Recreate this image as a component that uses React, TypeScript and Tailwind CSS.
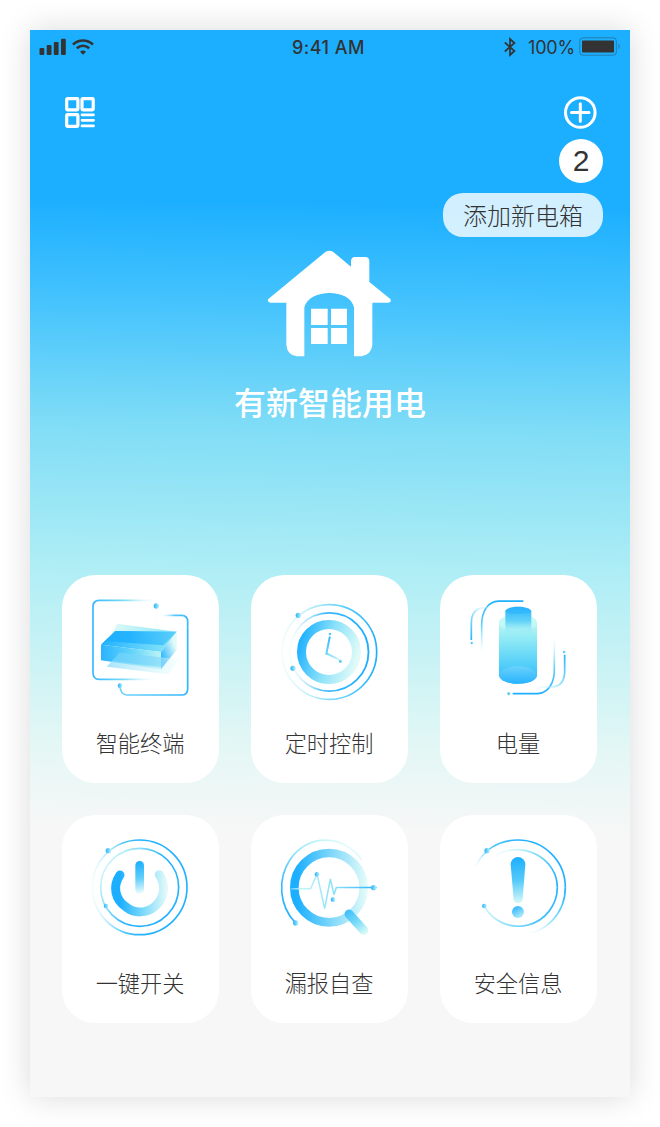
import React from "react";

const CJK = "font-['Noto_Sans_CJK_SC',sans-serif]";

function Stops({ from = "#1cafff", mid = "#7cdcf8", to = "#e2fbf8", end = 1 }: { from?: string; mid?: string; to?: string; end?: number }) {
  return (
    <>
      <stop offset="0" stopColor={from} />
      <stop offset="0.5" stopColor={mid} />
      <stop offset="1" stopColor={to} stopOpacity={end} />
    </>
  );
}

function Dot({ x, y, r = 7 }: { x: number; y: number; r?: number }) {
  return <circle cx={x} cy={y} r={r} fill="url(#dot)" />;
}

function SharedDefs() {
  return (
    <svg className="absolute h-0 w-0" aria-hidden="true">
      <defs>
        <linearGradient id="dot" x1="0" x2="1">
          <stop offset="0.2" stopColor="#3dbcfb" />
          <stop offset="1" stopColor="#b9f2f8" />
        </linearGradient>
      </defs>
    </svg>
  );
}

const iconClass = "block h-[130px] w-[157px] shrink-0";

function TerminalIcon() {
  return (
    <svg viewBox="6 15 471 390" className={iconClass} fill="none">
      <defs>
        <linearGradient id="t1" gradientUnits="userSpaceOnUse" x1="98" x2="290" y1="0" y2="0"><Stops from="#36b8ff" end={0} /></linearGradient>
        <linearGradient id="t2" gradientUnits="userSpaceOnUse" x1="384" x2="300" y1="0" y2="0"><Stops from="#36b8ff" mid="#5dc9fb" end={0} /></linearGradient>
        <linearGradient id="t2b" gradientUnits="userSpaceOnUse" x1="384" x2="180" y1="0" y2="0"><stop stopColor="#2eb5ff" /><stop offset="1" stopColor="#6fd3fa" /></linearGradient>
        <linearGradient id="t3" gradientUnits="userSpaceOnUse" x1="140" y1="220" x2="350" y2="185"><stop stopColor="#1cafff" /><stop offset="0.35" stopColor="#26b4fe" /><stop offset="1" stopColor="#5ccff9" /></linearGradient>
        <linearGradient id="t4" gradientUnits="userSpaceOnUse" x1="123" x2="303" y1="0" y2="0"><stop stopColor="#2ab4ff" /><stop offset="0.5" stopColor="#62d3f9" /><stop offset="1" stopColor="#bdf4f8" /></linearGradient>
        <linearGradient id="t5" gradientUnits="userSpaceOnUse" x1="303" x2="350" y1="260" y2="240"><stop stopColor="#2cb5ff" /><stop offset="1" stopColor="#dffaf8" /></linearGradient>
        <linearGradient id="t6" gradientUnits="userSpaceOnUse" x1="145" x2="350" y1="0" y2="0"><stop stopColor="#8bddfa" stopOpacity=".75" /><stop offset="1" stopColor="#e5fbfa" stopOpacity=".4" /></linearGradient>
        <linearGradient id="t7" gradientUnits="userSpaceOnUse" x1="160" x2="300" y1="160" y2="200"><stop stopColor="#dcfaf7" /><stop offset="1" stopColor="#9be9f8" /></linearGradient>
        <linearGradient id="t8" gradientUnits="userSpaceOnUse" x1="130" x2="305" y1="0" y2="0"><stop stopColor="#24b3ff" /><stop offset="1" stopColor="#7be0f8" /></linearGradient>
      </defs>
      <path d="M290 91H118Q99 91 99 110V308Q99 328 118 328H290" stroke="url(#t1)" strokeWidth="5" />
      <path d="M306 136H364Q383 136 383 155V172" stroke="url(#t2)" strokeWidth="5" />
      <path d="M383 172V356Q383 375 364 375H200Q181 373 180 349" stroke="url(#t2b)" strokeWidth="5" />
      <path d="M289 118V175" stroke="#e8f9fb" strokeWidth="1" />
      <Dot x={289} y={108} r={8} />
      <Dot x={180} y={347} />
      <path d="M172 161L350 185L330 210L155 193Z" fill="url(#t7)" />
      <path d="M123 224L166 183L350 185L303 246Z" fill="url(#t8)" />
      <path d="M123 224L166 183L350 185L309 226L140 214Z" fill="url(#t3)" />
      <path d="M123 224L303 246V298L123 271Z" fill="url(#t4)" />
      <path d="M303 246L350 185V240L303 298Z" fill="url(#t5)" />
      <path d="M178 248L358 268L324 313L140 290Z" fill="url(#t6)" />
      <path d="M178 248L303 262V291L148 272Z" fill="#3dc0fb" opacity=".35" />
    </svg>
  );
}

function TimerIcon() {
  return (
    <svg viewBox="9 15 471 390" className={iconClass} fill="none">
      <defs>
        <linearGradient id="c1" gradientUnits="userSpaceOnUse" x1="387" x2="100" y1="0" y2="0"><stop stopColor="#1cafff" /><stop offset="0.45" stopColor="#75d8f9" /><stop offset="1" stopColor="#e6fbfa" stopOpacity=".5" /></linearGradient>
        <linearGradient id="c2" gradientUnits="userSpaceOnUse" x1="360" x2="127" y1="0" y2="0"><stop stopColor="#1cafff" /><stop offset="0.55" stopColor="#3abafe" /><stop offset="1" stopColor="#dffaf9" stopOpacity=".3" /></linearGradient>
        <linearGradient id="c3" gradientUnits="userSpaceOnUse" x1="155" x2="330" y1="215" y2="265"><Stops from="#20b1ff" mid="#8ce2f9" /></linearGradient>
        <linearGradient id="c4" gradientUnits="userSpaceOnUse" x1="235" x2="280" y1="250" y2="274"><stop stopColor="#75d9f9" /><stop offset="1" stopColor="#e3fafa" /></linearGradient>
        <linearGradient id="c5" gradientUnits="userSpaceOnUse" x1="235" x2="246" y1="252" y2="190"><stop stopColor="#70d6f8" /><stop offset="1" stopColor="#29b4ff" /></linearGradient>
      </defs>
      <circle cx="244" cy="246" r="142" stroke="url(#c1)" strokeWidth="5" />
      <circle cx="244" cy="246" r="117.500" stroke="url(#c2)" strokeWidth="5.500" />
      <circle cx="243" cy="246" r="82.500" stroke="url(#c3)" strokeWidth="27" />
      <Dot x={151} y={136} r={8} />
      <Dot x={135} y={295} r={8} />
      <path d="M235 250L276 270" stroke="url(#c4)" strokeWidth="6" />
      <path d="M235 252L245 202" stroke="url(#c5)" strokeWidth="6" strokeLinecap="round" />
      <circle cx="246" cy="192" r="4" fill="#55c8fb" />
      <Dot x={278} y={274} r={5} />
    </svg>
  );
}

function EnergyIcon() {
  return (
    <svg viewBox="12 15 471 390" className={iconClass} fill="none">
      <defs>
        <linearGradient id="e1" gradientUnits="userSpaceOnUse" x1="0" x2="0" y1="135" y2="340"><stop stopColor="#d4fbf5" /><stop offset="0.3" stopColor="#98edf5" /><stop offset="0.75" stopColor="#4fcdf9" /><stop offset="1" stopColor="#2cb7fe" /></linearGradient>
        <linearGradient id="e2" gradientUnits="userSpaceOnUse" x1="0" x2="0" y1="110" y2="198"><stop stopColor="#28b3fe" /><stop offset="0.5" stopColor="#63d3f8" /><stop offset="1" stopColor="#9aeff5" stopOpacity="0" /></linearGradient>
        <linearGradient id="e3" gradientUnits="userSpaceOnUse" x1="0" x2="0" y1="288" y2="342"><stop stopColor="#6bd2fb" /><stop offset="1" stopColor="#27b3ff" /></linearGradient>
        <linearGradient id="e4" gradientUnits="userSpaceOnUse" x1="0" x2="0" y1="92" y2="255"><stop stopColor="#1cafff" /><stop offset="0.45" stopColor="#65d0fa" /><stop offset="1" stopColor="#c8f5fb" stopOpacity="0" /></linearGradient>
        <linearGradient id="e5" gradientUnits="userSpaceOnUse" x1="105" x2="180" y1="210" y2="112"><stop stopColor="#25b3ff" /><stop offset="0.55" stopColor="#95e4f9" /><stop offset="1" stopColor="#e0fafa" stopOpacity="0" /></linearGradient>
        <linearGradient id="e6" gradientUnits="userSpaceOnUse" x1="0" x2="0" y1="372" y2="198"><stop stopColor="#1cafff" /><stop offset="0.45" stopColor="#65d0fa" /><stop offset="1" stopColor="#c8f5fb" stopOpacity="0" /></linearGradient>
        <linearGradient id="e7" gradientUnits="userSpaceOnUse" x1="386" x2="285" y1="254" y2="352"><stop stopColor="#25b3ff" /><stop offset="0.5" stopColor="#95e4f9" /><stop offset="1" stopColor="#e0fafa" stopOpacity="0" /></linearGradient>
      </defs>
      <path d="M262 93.500H188C155 94 137 125 137 165V258" stroke="url(#e4)" strokeWidth="5" />
      <path d="M106 210V158Q107 115 145 113H185" stroke="url(#e5)" strokeWidth="5" />
      <path d="M230 371H304C337 370 355 339 355 300V198" stroke="url(#e6)" strokeWidth="5" />
      <path d="M386 254V306Q385 349 347 351H280" stroke="url(#e7)" strokeWidth="5" />
      <Dot x={108} y={219} r={4} />
      <Dot x={385} y={246} r={4} />
      <Dot x={219} y={371} r={5} />
      <path d="M189 158C189 127 303 127 303 158V316C298 350 194 350 189 316Z" fill="url(#e1)" />
      <ellipse cx="246" cy="158" rx="57" ry="25" fill="#cafaf5" opacity=".65" />
      <path d="M208 124C212 106 281 106 286 124V200H208Z" fill="url(#e2)" />
      <path d="M208 124C216 135 278 135 286 124C281 106 212 106 208 124Z" fill="#27b2ff" opacity=".45" />
      <path d="M189 316C201 279 291 279 303 316C298 350 194 350 189 316Z" fill="url(#e3)" />
    </svg>
  );
}

function PowerIcon() {
  return (
    <svg viewBox="6 15 471 390" className={iconClass} fill="none">
      <defs>
        <linearGradient id="p1" gradientUnits="userSpaceOnUse" x1="96" x2="383" y1="0" y2="0"><stop stopColor="#e2fbfa" stopOpacity=".4" /><stop offset="0.32" stopColor="#57cafb" /><stop offset="0.5" stopColor="#24b2ff" /><stop offset="1" stopColor="#24b2ff" /></linearGradient>
        <linearGradient id="p2" gradientUnits="userSpaceOnUse" x1="130" x2="310" y1="150" y2="250"><stop stopColor="#d8faf8" /><stop offset="0.4" stopColor="#84dcf9" /><stop offset="0.75" stopColor="#24b2ff" /></linearGradient>
        <linearGradient id="p3" gradientUnits="userSpaceOnUse" x1="160" x2="322" y1="0" y2="0"><stop offset="0.12" stopColor="#1cafff" /><stop offset="0.55" stopColor="#7bd9fa" /><stop offset="1" stopColor="#e5fbf9" /></linearGradient>
        <linearGradient id="p4" gradientUnits="userSpaceOnUse" x1="230" x2="248" y1="158" y2="250"><Stops from="#20b1ff" mid="#5fcefa" to="#f0fdfc" /></linearGradient>
      </defs>
      <circle cx="239" cy="232" r="142" stroke="url(#p1)" strokeWidth="5" />
      <circle cx="239" cy="232" r="117" stroke="url(#p2)" strokeWidth="5" />
      <path d="M180 195C155 232 168 270 197 290C224 312 260 310 285 289C314 264 319 228 298 194" stroke="url(#p3)" strokeWidth="27" strokeLinecap="round" />
      <rect x="226" y="153" width="26" height="98" rx="13" fill="url(#p4)" />
      <Dot x={145} y={122} r={8} />
      <Dot x={138} y={288} />
    </svg>
  );
}

function InspectIcon() {
  return (
    <svg viewBox="9 15 471 390" className={iconClass} fill="none">
      <defs>
        <linearGradient id="i1" gradientUnits="userSpaceOnUse" x1="120" x2="300" y1="310" y2="110"><stop stopColor="#24b2ff" /><stop offset="0.25" stopColor="#42befd" /><stop offset="0.65" stopColor="#a5ecf9" /><stop offset="1" stopColor="#dcfbfa" /></linearGradient>
        <linearGradient id="i2" gradientUnits="userSpaceOnUse" x1="128" x2="358" y1="0" y2="0"><stop offset="0.08" stopColor="#1cafff" /><stop offset="0.5" stopColor="#78d5fa" /><stop offset="1" stopColor="#e6fcf9" /></linearGradient>
        <linearGradient id="i3" gradientUnits="userSpaceOnUse" x1="300" x2="350" y1="305" y2="370"><Stops from="#43c0fb" mid="#7adbf8" to="#d8faf7" /></linearGradient>
        <linearGradient id="i4" gradientUnits="userSpaceOnUse" x1="130" x2="386" y1="0" y2="0"><stop stopColor="#68ccf7" /><stop offset="0.12" stopColor="#c5f5f7" /><stop offset="0.55" stopColor="#83ddf7" /><stop offset="1" stopColor="#25b2ff" /></linearGradient>
      </defs>
      <path d="M143 339C92 288 88 205 127 148C178 72 283 70 341 149" stroke="url(#i1)" strokeWidth="5" />
      <circle cx="243" cy="233" r="104" stroke="url(#i2)" strokeWidth="26" />
      <path d="M303 312L347 361" stroke="url(#i3)" strokeWidth="27" strokeLinecap="round" />
      <path d="M128 236H188L207 192L230 296L247 207L258 254L265 232.500H386" stroke="url(#i4)" strokeWidth="4.500" strokeLinejoin="bevel" />
      <Dot x={143} y={339} r={8} />
      <Dot x={207} y={193} />
      <Dot x={255} y={269} />
      <Dot x={377} y={233} r={8} />
    </svg>
  );
}

function SafetyIcon() {
  return (
    <svg viewBox="12 15 471 390" className={iconClass} fill="none">
      <defs>
        <linearGradient id="s1" gradientUnits="userSpaceOnUse" x1="115" x2="250" y1="170" y2="90"><stop stopColor="#dcfafa" stopOpacity=".2" /><stop offset="0.4" stopColor="#5fcefa" /><stop offset="1" stopColor="#24b2ff" /></linearGradient>
        <linearGradient id="s2" gradientUnits="userSpaceOnUse" x1="387" x2="270" y1="232" y2="372"><stop stopColor="#24b2ff" /><stop offset="0.55" stopColor="#8be1f8" /><stop offset="1" stopColor="#e4fbfa" stopOpacity="0" /></linearGradient>
        <linearGradient id="s3" gradientUnits="userSpaceOnUse" x1="180" x2="364" y1="120" y2="200"><stop stopColor="#e4fbfa" stopOpacity=".3" /><stop offset="0.5" stopColor="#92e4f9" /><stop offset="1" stopColor="#24b2ff" /></linearGradient>
        <linearGradient id="s4" gradientUnits="userSpaceOnUse" x1="364" x2="145" y1="232" y2="290"><stop stopColor="#24b2ff" /><stop offset="0.6" stopColor="#65d0fa" /><stop offset="1" stopColor="#c5f4f9" /></linearGradient>
        <linearGradient id="s5" gradientUnits="userSpaceOnUse" x1="238" x2="252" y1="142" y2="282"><Stops from="#1cafff" mid="#57caf9" to="#dcfbf8" /></linearGradient>
        <linearGradient id="s6" x1="0.2" x2="0.8" y1="0" y2="1"><stop stopColor="#28b3ff" /><stop offset="1" stopColor="#bcf1f9" /></linearGradient>
      </defs>
      <path d="M120 168C142 121 185 90 246 90A142 142 0 0 1 388 232" stroke="url(#s1)" strokeWidth="5" />
      <path d="M388 232C388 310 330 370 255 373" stroke="url(#s2)" strokeWidth="5" />
      <path d="M181 134C265 90 364 148 364 232" stroke="url(#s3)" strokeWidth="5" />
      <path d="M364 232A117 117 0 0 1 145 289" stroke="url(#s4)" strokeWidth="5" />
      <Dot x={153} y={122} r={8} />
      <Dot x={145} y={288} />
      <path d="M224 163A22 22 0 0 1 268 163L260 269A14 14 0 0 1 233 269Z" fill="url(#s5)" />
      <circle cx="246" cy="306" r="18" fill="url(#s6)" />
    </svg>
  );
}

function HouseIcon() {
  return (
    <svg viewBox="132 54 396 336" className="h-[112px] w-[132px]" fill="#fff">
      <path d="M316 66Q328 58 340 66L393 110V94Q393 81 406 81H435Q448 81 448 94V156L511 207Q516 216 505 218H457V345Q454 374 424 379H402V232C390 175 268 175 253 232V379H231Q202 376 199 345V218H150Q140 215 145 207Z" />
      <path d="M273 236H323V285H273ZM333 236H381V285H333ZM273 294H323V342H273ZM333 294H381V342H333Z" />
    </svg>
  );
}

function StatusBar() {
  return (
    <div className="grid h-[34px] grid-cols-3 items-center pl-[9px] pr-[9px] font-['Inter',sans-serif] text-[#333]">
      <div className="flex items-center gap-[6px]">
        <svg viewBox="0 0 27 17" className="-mt-[2px] h-[17px] w-[27px]" fill="#333">
          <rect x="0.500" y="10" width="4.800" height="7" rx="1" />
          <rect x="7.700" y="7" width="4.800" height="10" rx="1" />
          <rect x="14.800" y="4" width="4.800" height="13" rx="1" />
          <rect x="22" y="0.800" width="4.800" height="16.200" rx="1" />
        </svg>
        <svg viewBox="0 0 22 16" className="-mt-px h-[16px] w-[22px]" fill="none" stroke="#333" strokeWidth="2.700">
          <path d="M1 5.400C6.800 .2 15.200 .2 21 5.400" />
          <path d="M4.800 9.300C8.500 6.100 13.500 6.100 17.200 9.300" />
          <path d="M8 12.800Q11 10.400 14 12.800L11 15.700Z" fill="#333" stroke="none" />
        </svg>
      </div>
      <div className="whitespace-nowrap pr-[3px] pt-[1px] text-center text-[18px] font-medium leading-none tracking-[0.500px]">9:41 AM</div>
      <div className="flex items-center justify-end">
        <svg viewBox="0 0 12 20" className="-mt-px mr-[12px] h-[20px] w-[12px]" fill="none" stroke="#333" strokeWidth="1.700">
          <path d="M.8 5.500L10.500 14L6 18V2L10.500 6L.8 14.500" />
        </svg>
        <span className="mr-[4px] pt-[1px] text-[18px] leading-none tracking-[-0.200px]">100%</span>
        <svg viewBox="0 0 42 19" className="-mt-px h-[19px] w-[42px]" fill="none">
          <rect x="0.800" y="0.800" width="36.500" height="17.400" rx="3" stroke="#333" strokeOpacity=".4" />
          <rect x="3" y="3.500" width="32" height="12" rx="0.800" fill="#333" />
          <path d="M39.500 6.500Q41.500 9.500 39.500 12.500Z" fill="#333" fillOpacity=".55" />
        </svg>
      </div>
    </div>
  );
}

const features = [
  { label: "智能终端", Icon: TerminalIcon },
  { label: "定时控制", Icon: TimerIcon },
  { label: "电量", Icon: EnergyIcon },
  { label: "一键开关", Icon: PowerIcon },
  { label: "漏报自查", Icon: InspectIcon },
  { label: "安全信息", Icon: SafetyIcon },
];

export default function App() {
  return (
    <div className="h-[1127px] w-[660px] bg-white p-[30px]">
      <SharedDefs />
      <main className={`flex h-[1067px] w-[600px] flex-col bg-[linear-gradient(181deg,#1cafff_0%,#1cafff_16.500%,#45c3fd_26%,#80ddf6_37.500%,#b0eef5_51%,#e3f7f5_67%,#f7f7f7_75%)] shadow-[0_0_30px_rgba(0,0,0,0.15)] ${CJK}`}>
        <StatusBar />
        <header className="flex h-[66px] items-start justify-between pl-[35px] pr-[33px] pt-[32px]">
          <svg viewBox="0 0 30 32" className="mt-[1px] h-[32px] w-[30px]" fill="none" stroke="#fff" strokeWidth="3.200">
            <rect x="1.700" y="1.700" width="11.200" height="11.200" rx="0.800" />
            <rect x="17" y="1.700" width="11.200" height="11.200" rx="0.800" />
            <rect x="1.700" y="17.700" width="11.200" height="11.600" rx="0.800" />
            <path d="M17 17.800H28.500M17 23.300H28.500M17 28.900H28.500" strokeWidth="2.800" strokeLinecap="round" />
          </svg>
          <svg viewBox="0 0 34 34" className="h-[34px] w-[34px]" fill="none" stroke="#fff" strokeWidth="3">
            <circle cx="17.300" cy="16.500" r="14.800" />
            <path d="M8.500 16.500H26M17.300 7.800V25.200" strokeLinecap="round" />
          </svg>
        </header>
        <div className="flex h-[107px] flex-col items-end gap-[10px] pr-[27px] pt-[9px]">
          <div className="flex h-[44px] w-[44px] items-center justify-center rounded-full bg-white font-['Liberation_Sans',sans-serif] text-[30px] leading-none text-[#333]">2</div>
          <button className="flex h-[44px] w-[160px] items-center justify-center rounded-[20px] bg-white/80 text-[24px] font-light leading-none text-[#333]">添加新电箱</button>
        </div>
        <section className="flex h-[338px] flex-col items-center pt-[11px]">
          <HouseIcon />
          <h1 className="mt-[23px] text-[32px] font-medium leading-[36px] text-white">有新智能用电</h1>
        </section>
        <nav className="ml-[32px] grid grid-cols-[157px_157px_157px] gap-[32px]">
          {features.map(({ label, Icon }) => (
            <a key={label} className="flex h-[208px] w-[157px] flex-col items-center rounded-[33px] bg-white">
              <Icon />
              <span className="mt-[21px] pr-[1px] text-[22.200px] font-light leading-[32px] text-[#333]">{label}</span>
            </a>
          ))}
        </nav>
      </main>
    </div>
  );
}
